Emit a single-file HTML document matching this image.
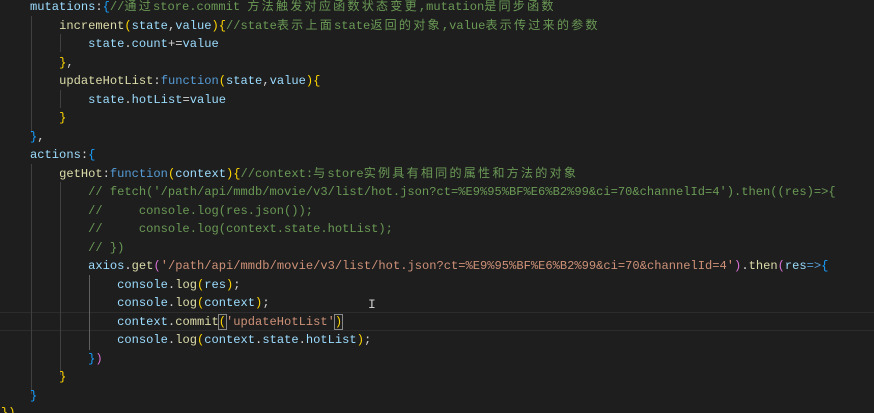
<!DOCTYPE html>
<html><head><meta charset="utf-8"><style>
html,body{margin:0;padding:0;background:#1e1e1e;width:874px;height:413px;overflow:hidden;position:relative}
.l{position:absolute;left:1px;height:18.5px;line-height:18.5px;white-space:pre;font-family:"Liberation Mono","Noto Sans CJK SC",monospace;font-size:12.1px;color:#9cdcfe}
.c{color:#6a9955}.f{color:#dcdcaa}.k{color:#569cd6}.s{color:#ce9178}.p{color:#d4d4d4}
.y{color:#ffd700}.m{color:#da70d6}.b{color:#179fff}
.z{letter-spacing:2.2px}
.g{position:absolute;width:1px;background:#404040}
.hl{position:absolute;left:0;width:874px;top:312px;height:17px;border-top:1px solid #2c2c2c;border-bottom:1px solid #2c2c2c}
</style></head><body>
<div class="hl"></div>
<div class="g" style="left:31px;top:16px;height:117px"></div>
<div class="g" style="left:60px;top:34px;height:18px"></div>
<div class="g" style="left:60px;top:90px;height:18px"></div>
<div class="g" style="left:31px;top:164px;height:230px"></div>
<div class="g" style="left:60px;top:182px;height:193px"></div>
<div class="g" style="left:89px;top:275px;height:75px;background:#606060"></div>
<div class="l" style="top:-2px">    mutations<span class="p">:</span><span class="b">{</span><span class="c">//<span class="z">通过</span>store.commit <span class="z">方法触发对应函数状态变更</span>,mutation<span class="z">是同步函数</span></span></div>
<div class="l" style="top:16.5px">        <span class="f">increment</span><span class="y">(</span>state<span class="p">,</span>value<span class="y">){</span><span class="c">//state<span class="z">表示上面</span>state<span class="z">返回的对象</span>,value<span class="z">表示传过来的参数</span></span></div>
<div class="l" style="top:35px">            state<span class="p">.</span>count<span class="p">+=</span>value</div>
<div class="l" style="top:53.5px">        <span class="y">}</span><span class="p">,</span></div>
<div class="l" style="top:72px">        <span class="f">updateHotList</span><span class="p">:</span><span class="k">function</span><span class="y">(</span>state<span class="p">,</span>value<span class="y">){</span></div>
<div class="l" style="top:90.5px">            state<span class="p">.</span>hotList<span class="p">=</span>value</div>
<div class="l" style="top:109px">        <span class="y">}</span></div>
<div class="l" style="top:127.5px">    <span class="b">}</span><span class="p">,</span></div>
<div class="l" style="top:146px">    actions<span class="p">:</span><span class="b">{</span></div>
<div class="l" style="top:164.5px">        <span class="f">getHot</span><span class="p">:</span><span class="k">function</span><span class="y">(</span>context<span class="y">){</span><span class="c">//context:<span class="z">与</span>store<span class="z">实例具有相同的属性和方法的对象</span></span></div>
<div class="l" style="top:183px"><span class="c">            // fetch('/path/api/mmdb/movie/v3/list/hot.json?ct=%E9%95%BF%E6%B2%99&amp;ci=70&amp;channelId=4').then((res)=&gt;{</span></div>
<div class="l" style="top:201.5px"><span class="c">            //     console.log(res.json());</span></div>
<div class="l" style="top:220px"><span class="c">            //     console.log(context.state.hotList);</span></div>
<div class="l" style="top:238.5px"><span class="c">            // })</span></div>
<div class="l" style="top:257px">            axios<span class="p">.</span><span class="f">get</span><span class="m">(</span><span class="s">'/path/api/mmdb/movie/v3/list/hot.json?ct=%E9%95%BF%E6%B2%99&amp;ci=70&amp;channelId=4'</span><span class="m">)</span><span class="p">.</span><span class="f">then</span><span class="m">(</span>res<span class="k">=&gt;</span><span class="b">{</span></div>
<div class="l" style="top:275.5px">                console<span class="p">.</span><span class="f">log</span><span class="y">(</span>res<span class="y">)</span><span class="p">;</span></div>
<div class="l" style="top:294px">                console<span class="p">.</span><span class="f">log</span><span class="y">(</span>context<span class="y">)</span><span class="p">;</span></div>
<div class="l" style="top:312.5px">                context<span class="p">.</span><span class="f">commit</span><span class="y" style="outline:1px solid #888">(</span><span class="s">'updateHotList'</span><span class="y" style="outline:1px solid #888">)</span></div>
<div class="l" style="top:331px">                console<span class="p">.</span><span class="f">log</span><span class="y">(</span>context<span class="p">.</span>state<span class="p">.</span>hotList<span class="y">)</span><span class="p">;</span></div>
<div class="l" style="top:349.5px">            <span class="b">}</span><span class="m">)</span></div>
<div class="l" style="top:368px">        <span class="y">}</span></div>
<div class="l" style="top:386.5px">    <span class="b">}</span></div>
<div class="l" style="top:404px;height:9px;overflow:hidden"><span class="y">})</span></div>
<div class="l" style="top:296px;left:368px;color:#ccc;font-size:13px">I</div>
</body></html>
